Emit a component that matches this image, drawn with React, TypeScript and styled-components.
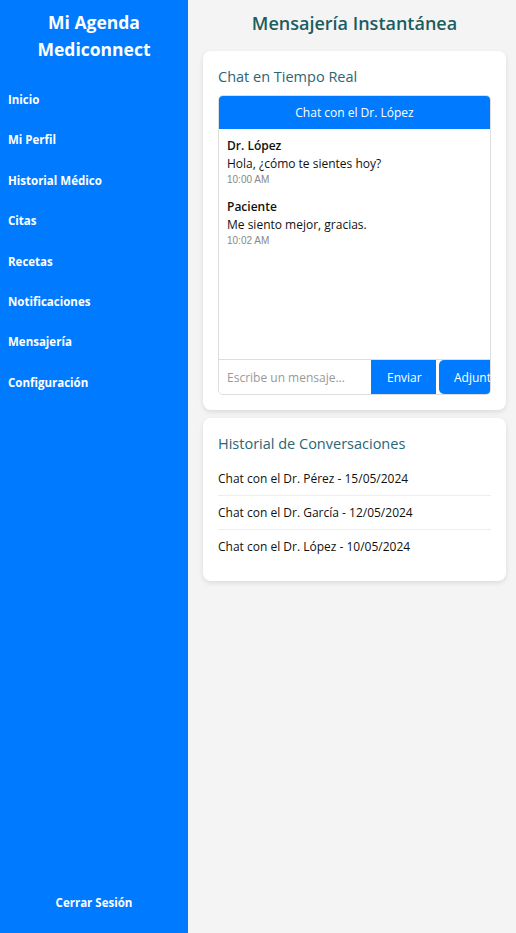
import React from 'react';
import styled, {createGlobalStyle} from 'styled-components';

const GlobalStyle = createGlobalStyle`
  html, body {
    margin: 0;
    padding: 0;
    height: 100%;
  }
  body {
    font-family: "Open Sans", "Liberation Sans", sans-serif;
    background: #f4f4f4;
  }
  #root {
    height: 100%;
  }
`

const menu: string[] = [
    'Inicio',
    'Mi Perfil',
    'Historial Médico',
    'Citas',
    'Recetas',
    'Notificaciones',
    'Mensajería',
    'Configuración'
]

const messages: { from: string, text: string, time: string }[] = [
    {from: 'Dr. López', text: 'Hola, ¿cómo te sientes hoy?', time: '10:00 AM'},
    {from: 'Paciente', text: 'Me siento mejor, gracias.', time: '10:02 AM'}
]

const history: string[] = [
    'Chat con el Dr. Pérez - 15/05/2024',
    'Chat con el Dr. García - 12/05/2024',
    'Chat con el Dr. López - 10/05/2024'
]

const Layout = styled.div`
  display: flex;
  height: 933px;
  overflow: hidden;
`

const Sidebar = styled.aside`
  width: 188px;
  flex-shrink: 0;
  background: #007bff;
  color: #fff;
  display: flex;
  flex-direction: column;
`

const Brand = styled.h2`
  margin: 9px 0 0;
  font-size: 17.5px;
  line-height: 27px;
  font-weight: 700;
  text-align: center;
`

const Menu = styled.ul`
  list-style: none;
  margin: 17px 0 0;
  padding: 0;
`

const MenuItem = styled.li`
  padding: 10px 8px;
  font-size: 11.5px;
  line-height: 20.4px;
  font-weight: 700;
`

const Logout = styled.div`
  margin-top: auto;
  padding-bottom: 20px;
  text-align: center;
  font-size: 11.5px;
  line-height: 20px;
  font-weight: 700;
`

const Main = styled.main`
  flex: 1;
  min-width: 0;
  padding: 0 10px 0 15px;
`

const Title = styled.h1`
  margin: 9px 0 14px;
  font-size: 18px;
  line-height: 28px;
  font-weight: 600;
  color: #1d5c5f;
  text-align: center;
`

const Card = styled.section<{ $bottom?: number }>`
  background: #fff;
  border-radius: 8px;
  box-shadow: 0 2px 5px rgba(0, 0, 0, 0.1);
  padding: 15px 15px ${p => p.$bottom ?? 15}px;
  margin-bottom: 8px;
`

const CardTitle = styled.h3`
  margin: 0 0 7px;
  font-size: 14.5px;
  line-height: 22px;
  font-weight: 400;
  color: #2b6676;
`

const ChatBox = styled.div`
  border: 1px solid #ddd;
  border-radius: 5px;
  height: 300px;
  box-sizing: border-box;
  display: flex;
  flex-direction: column;
  overflow: hidden;
`

const ChatHeader = styled.div`
  background: #007bff;
  color: #fff;
  text-align: center;
  font-size: 12px;
  line-height: 33px;
  height: 33px;
  flex-shrink: 0;
`

const ChatMessages = styled.div`
  flex: 1;
  padding: 8px 8px;
`

const Message = styled.div`
  margin-bottom: 11px;
`

const Sender = styled.div`
  font-size: 12px;
  line-height: 18px;
  font-weight: 600;
  color: #111;
`

const Text = styled.div`
  font-size: 12px;
  line-height: 18px;
  color: #111;
`

const Time = styled.div`
  font-family: "Liberation Sans", Arial, sans-serif;
  font-size: 10px;
  line-height: 14px;
  color: #888;
`

const InputRow = styled.div`
  display: flex;
  height: 34px;
  flex-shrink: 0;
  border-top: 1px solid #ddd;
  white-space: nowrap;
`

const Input = styled.input`
  width: 152px;
  flex-shrink: 0;
  box-sizing: border-box;
  border: none;
  outline: none;
  padding: 0 8px;
  font-family: "Open Sans", sans-serif;
  font-size: 12px;
  color: #333;
  &::placeholder {
    color: #999;
  }
`

const Button = styled.button<{ $rounded?: boolean }>`
  flex-shrink: 0;
  width: 65px;
  border: none;
  background: #007bff;
  color: #fff;
  font-family: "Open Sans", sans-serif;
  font-size: 12px;
  padding: 0 15px;
  margin-right: 3px;
  text-align: left;
  padding-left: ${p => p.$rounded ? '15px' : '16px'};
  border-radius: ${p => p.$rounded ? '5px' : '0'};
`

const HistoryList = styled.ul`
  list-style: none;
  margin: 0;
  padding: 0;
`

const HistoryItem = styled.li`
  padding: 8px 0;
  font-size: 12px;
  line-height: 17px;
  color: #111;
  border-bottom: 1px solid #eee;
  &:last-child {
    border-bottom: none;
  }
`

const App = () => {
    return (
        <>
            <GlobalStyle/>
            <Layout>
                <Sidebar>
                    <Brand>Mi Agenda<br/>Mediconnect</Brand>
                    <Menu>
                        {menu.map(item => <MenuItem key={item}>{item}</MenuItem>)}
                    </Menu>
                    <Logout>Cerrar Sesión</Logout>
                </Sidebar>
                <Main>
                    <Title>Mensajería Instantánea</Title>
                    <Card>
                        <CardTitle>Chat en Tiempo Real</CardTitle>
                        <ChatBox>
                            <ChatHeader>Chat con el Dr. López</ChatHeader>
                            <ChatMessages>
                                {messages.map((m, i) => <Message key={i}>
                                    <Sender>{m.from}</Sender>
                                    <Text>{m.text}</Text>
                                    <Time>{m.time}</Time>
                                </Message>)}
                            </ChatMessages>
                            <InputRow>
                                <Input placeholder={'Escribe un mensaje...'}/>
                                <Button>Enviar</Button>
                                <Button $rounded>Adjuntar</Button>
                            </InputRow>
                        </ChatBox>
                    </Card>
                    <Card $bottom={18}>
                        <CardTitle>Historial de Conversaciones</CardTitle>
                        <HistoryList>
                            {history.map(h => <HistoryItem key={h}>{h}</HistoryItem>)}
                        </HistoryList>
                    </Card>
                </Main>
            </Layout>
        </>
    );
};

export default App;
